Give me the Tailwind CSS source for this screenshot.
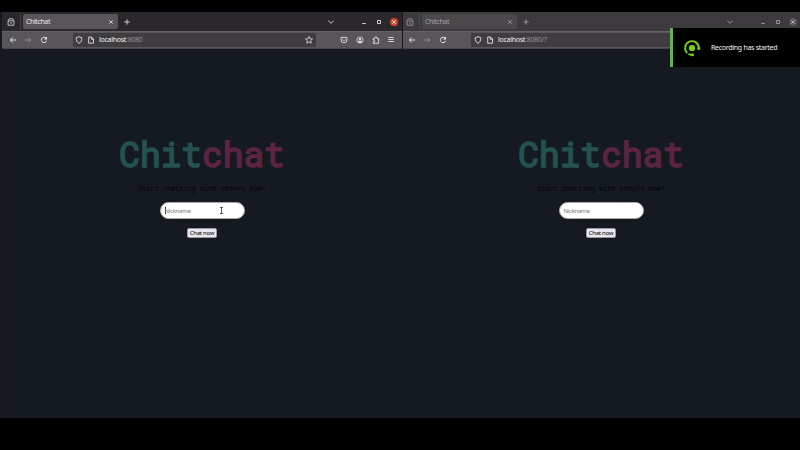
<!DOCTYPE html>
<html lang="en">
<head>
<meta charset="utf-8">
<title>Chitchat</title>
<script src="https://cdn.jsdelivr.net/npm/@tailwindcss/browser@4"></script>
</head>
<body class="relative h-[450px] w-[800px] overflow-hidden bg-black pt-[12px] font-['Noto_Sans','Open_Sans',sans-serif] tracking-[-0.28px]">
<svg class="hidden">
  <symbol id="view" viewBox="0 0 10 10"><path d="M3.200 1.800h3.600M2.300 3.900h5.400M2.100 3.900v4.300h5.800V3.900L6.800 1.800M3.200 1.800L2.100 3.900M4 6h2" fill="none" stroke="currentColor" stroke-width=".9"/></symbol>
  <symbol id="x" viewBox="0 0 10 10"><path d="M3.2 3.2l3.6 3.6M6.8 3.2L3.2 6.8" fill="none" stroke="currentColor" stroke-width=".9"/></symbol>
  <symbol id="plus" viewBox="0 0 10 10"><path d="M5 2.3v5.4M2.3 5h5.4" fill="none" stroke="currentColor" stroke-width="1"/></symbol>
  <symbol id="chev" viewBox="0 0 10 10"><path d="M2.3 3.7L5 6.3l2.7-2.6" fill="none" stroke="currentColor" stroke-width="1"/></symbol>
  <symbol id="min" viewBox="0 0 10 10"><path d="M3.2 6.5h3.6" fill="none" stroke="currentColor" stroke-width="1"/></symbol>
  <symbol id="max" viewBox="0 0 10 10"><path d="M3.5 3.5h3v3h-3z" fill="none" stroke="currentColor" stroke-width="1"/></symbol>
  <symbol id="back" viewBox="0 0 10 10"><path d="M8.2 5H2.2M4.7 2.5L2.2 5l2.5 2.5" fill="none" stroke="currentColor" stroke-width="1"/></symbol>
  <symbol id="fwd" viewBox="0 0 10 10"><path d="M1.8 5h6M5.3 2.5L7.8 5 5.3 7.5" fill="none" stroke="currentColor" stroke-width="1"/></symbol>
  <symbol id="reload" viewBox="0 0 10 10"><path d="M7.2 3.3A2.7 2.7 0 1 0 7.6 5.8" fill="none" stroke="currentColor" stroke-width="1"/><path d="M8 1.6v3H5z" fill="currentColor"/></symbol>
  <symbol id="shield" viewBox="0 0 10 10"><path d="M5 1.7l2.8 1c0 2.800-.6 4.300-2.800 5.700C2.800 7 2.200 5.500 2.200 2.700z" fill="none" stroke="currentColor" stroke-width=".9"/></symbol>
  <symbol id="doc" viewBox="0 0 10 10"><path d="M2.700 2h2.800l2 2v4.200H2.700zM5.300 2v2.200h2.200" fill="none" stroke="currentColor" stroke-width=".9"/></symbol>
  <symbol id="star" viewBox="0 0 10 10"><path d="M5 1.500l1 2.300 2.500.2-1.900 1.700.6 2.500L5 6.900 2.800 8.200l.6-2.500L1.500 4 4 3.800z" fill="none" stroke="currentColor" stroke-width=".8" stroke-linejoin="round"/></symbol>
  <symbol id="pocket" viewBox="0 0 10 10"><path d="M2 2.400h6v2.400a3 3 0 0 1-6 0zM3.500 4.300L5 5.700l1.500-1.400" fill="none" stroke="currentColor" stroke-width=".9" stroke-linejoin="round"/></symbol>
  <symbol id="user" viewBox="0 0 10 10"><circle cx="5" cy="5" r="3.100" fill="none" stroke="currentColor" stroke-width=".8"/><circle cx="5" cy="4.100" r="1.200" fill="currentColor"/><path d="M2.900 7c.5-1.800 3.700-1.800 4.200 0L5 8z" fill="currentColor"/></symbol>
  <symbol id="ext" viewBox="0 0 10 10"><path d="M2.300 3.500h1.600v-.7a1 1 0 0 1 2 0v.7h1.700v4.800H2.300V6.700h.9a.9.900 0 0 0 0-1.700h-.9z" fill="none" stroke="currentColor" stroke-width=".9" stroke-linejoin="round"/></symbol>
  <symbol id="menu" viewBox="0 0 10 10"><path d="M2.300 2.500h5.400M2.300 4.500h5.400M2.300 6.500h5.400" fill="none" stroke="currentColor" stroke-width=".9"/></symbol>
</svg>

<div class="flex h-[406px] bg-[#17191d] pl-[2px]">
  <!-- active window -->
  <section class="flex w-[400px] flex-col bg-[#151a21]">
    <div class="flex h-[19px] items-center bg-[#2a282c] pr-[3px] text-[#d0ced2]">
      <svg class="ml-[4px] size-[10px]"><use href="#view"/></svg>
      <div class="ml-[4px] h-[17px] w-px bg-[#454247]"></div>
      <div class="ml-[2px] flex h-[15px] w-[95px] items-center justify-between rounded-[2px] bg-[#59565a] pr-[2px] pl-[3px]">
        <span class="pt-[2px] text-[7px] tracking-[-0.4px] text-[#e8e6e8]">Chitchat</span>
        <svg class="size-[10px]"><use href="#x"/></svg>
      </div>
      <svg class="ml-[4px] size-[10px]"><use href="#plus"/></svg>
      <svg class="ml-auto size-[10px]"><use href="#chev"/></svg>
      <svg class="ml-[23px] size-[10px]"><use href="#min"/></svg>
      <svg class="ml-[5px] size-[10px]"><use href="#max"/></svg>
      <div class="ml-[6px] size-[8px] rounded-full bg-[#d6452a] text-white"><svg class="-m-px size-[10px]"><use href="#x"/></svg></div>
      <div class="w-[1px]"></div>
    </div>
    <div class="flex h-[18px] items-center border-t border-b border-t-[#656266] border-b-[#49464a] bg-[#59565a] pr-[6px] pl-[6px] text-[#e4e2e5]">
      <svg class="size-[10px]"><use href="#back"/></svg>
      <svg class="ml-[5px] size-[10px] text-[#8b888d]"><use href="#fwd"/></svg>
      <svg class="ml-[6px] size-[10px]"><use href="#reload"/></svg>
      <div class="ml-[24px] flex h-[14px] w-[243px] items-center rounded-[2px] bg-[#403d41] pr-[2px] pl-[1px]">
        <svg class="size-[10px]"><use href="#shield"/></svg>
        <svg class="ml-[2px] size-[10px]"><use href="#doc"/></svg>
        <span class="ml-[3px] text-[7px] text-[#f0eef1]">localhost<span class="text-[#949197]">:8080</span></span>
        <svg class="ml-auto size-[10px]"><use href="#star"/></svg>
      </div>
      <div class="ml-auto flex gap-[6px]">
        <svg class="size-[10px]"><use href="#pocket"/></svg>
        <svg class="size-[10px]"><use href="#user"/></svg>
        <svg class="size-[10px]"><use href="#ext"/></svg>
        <svg class="-ml-px size-[10px]"><use href="#menu"/></svg>
      </div>
    </div>
    <main class="flex flex-col items-center pt-[85px]">
      <h1 class="h-[40px] font-['Roboto_Mono','DejaVu_Sans_Mono',monospace] text-[34.500px] leading-[40px] tracking-normal whitespace-nowrap [-webkit-text-stroke:1.6px_currentColor]"><span class="text-[#24524f]">Chit</span><span class="text-[#5b2440]">chat</span></h1>
      <p class="mt-[10px] font-['Roboto_Mono','DejaVu_Sans_Mono',monospace] text-[6.900px] leading-[10px] tracking-normal text-[#030405]">Start chatting with others now!</p>
      <div class="mt-[8px] flex h-[17px] w-[85px] items-center rounded-full border border-[#aaa9ad] bg-white pl-[4px]">
        <div class="-mr-px h-[7px] w-px bg-[#333]"></div>
        <span class="text-[6px] leading-[8px] text-[#757477]">Nickname</span>
        <svg class="ml-auto mr-[20px] h-[9px] w-[5px]" viewBox="0 0 5 9"><path d="M1 1.500h3M1 7.500h3M2.500 1.500v6" fill="none" stroke="#333" stroke-width=".8"/></svg>
      </div>
      <button class="mt-[9px] h-[10px] w-[30px] rounded-[2px] border border-[#99989e] bg-[#e9e9ed] text-[6px] leading-[8px] tracking-[-0.28px] whitespace-nowrap text-black">Chat now</button>
    </main>
  </section>

  <!-- inactive window -->
  <section class="ml-[1px] flex w-[397px] flex-col bg-[#151a21]">
    <div class="flex h-[19px] items-center bg-[#3d3a3e] pr-[3px] text-[#969398]">
      <svg class="ml-[2px] size-[10px]"><use href="#view"/></svg>
      <div class="ml-[4px] h-[17px] w-px bg-[#4b484c]"></div>
      <div class="ml-[2px] flex h-[15px] w-[95px] items-center justify-between rounded-[2px] bg-[#4b484c] pr-[2px] pl-[3px]">
        <span class="pt-[2px] text-[7px] tracking-[-0.4px] text-[#a19ea3]">Chitchat</span>
        <svg class="size-[10px]"><use href="#x"/></svg>
      </div>
      <svg class="ml-[4px] size-[10px]"><use href="#plus"/></svg>
      <svg class="ml-auto size-[10px]"><use href="#chev"/></svg>
      <svg class="ml-[23px] size-[10px]"><use href="#min"/></svg>
      <svg class="ml-[5px] size-[10px]"><use href="#max"/></svg>
      <div class="ml-[6px] size-[8px] rounded-full bg-[#59565a] text-[#bbb]"><svg class="-m-px size-[10px]"><use href="#x"/></svg></div>
    </div>
    <div class="flex h-[18px] items-center border-t border-b border-t-[#656266] border-b-[#49464a] bg-[#59565a] pl-[4px] text-[#e4e2e5]">
      <svg class="size-[10px]"><use href="#back"/></svg>
      <svg class="ml-[5px] size-[10px] text-[#8b888d]"><use href="#fwd"/></svg>
      <svg class="ml-[6px] size-[10px]"><use href="#reload"/></svg>
      <div class="ml-[23px] flex h-[14px] w-[243px] items-center rounded-[2px] bg-[#403d41] pl-[2px]">
        <svg class="size-[10px]"><use href="#shield"/></svg>
        <svg class="ml-[2px] size-[10px]"><use href="#doc"/></svg>
        <span class="ml-[3px] text-[7px] text-[#f0eef1]">localhost<span class="text-[#949197]">:8080/?</span></span>
      </div>
    </div>
    <main class="flex flex-col items-center pt-[85px] pr-[1px]">
      <h1 class="h-[40px] font-['Roboto_Mono','DejaVu_Sans_Mono',monospace] text-[34.500px] leading-[40px] tracking-normal whitespace-nowrap [-webkit-text-stroke:1.6px_currentColor]"><span class="text-[#24524f]">Chit</span><span class="text-[#5b2440]">chat</span></h1>
      <p class="mt-[10px] font-['Roboto_Mono','DejaVu_Sans_Mono',monospace] text-[6.900px] leading-[10px] tracking-normal text-[#030405]">Start chatting with others now!</p>
      <div class="mt-[8px] flex h-[17px] w-[85px] items-center rounded-full border border-[#aaa9ad] bg-white pl-[4px]">
        <span class="text-[6px] leading-[8px] text-[#757477]">Nickname</span>
      </div>
      <button class="mt-[9px] h-[10px] w-[30px] rounded-[2px] border border-[#99989e] bg-[#e9e9ed] text-[6px] leading-[8px] tracking-[-0.28px] whitespace-nowrap text-black">Chat now</button>
    </main>
  </section>
</div>

<!-- desktop notification -->
<aside class="absolute top-[28px] right-0 flex h-[39px] w-[130px] items-center border-l-3 border-[#58b848] bg-black">
  <svg class="ml-[10px] size-[18px]" viewBox="0 0 18 18"><circle cx="9" cy="9" r="3.100" fill="#76d60f"/><path d="M4.300 14.100A6.900 6.900 0 1 1 15.900 9.300M4.300 14.100Q6 15.900 9.300 15.900" fill="none" stroke="none"/><path d="M4.300 14.100A6.900 6.900 0 1 1 15.900 9.300M5.500 14.900Q7 15.900 9.300 15.900" fill="none" stroke="#76c81c" stroke-width="1.900"/><circle cx="15.800" cy="9.500" r="1.500" fill="#76d60f"/><circle cx="9.500" cy="15.800" r="1.500" fill="#76d60f"/></svg>
  <span class="ml-[10px] pt-[2px] text-[7px] whitespace-nowrap text-[#f4f4f4]">Recording has started</span>
</aside>
</body>
</html>
